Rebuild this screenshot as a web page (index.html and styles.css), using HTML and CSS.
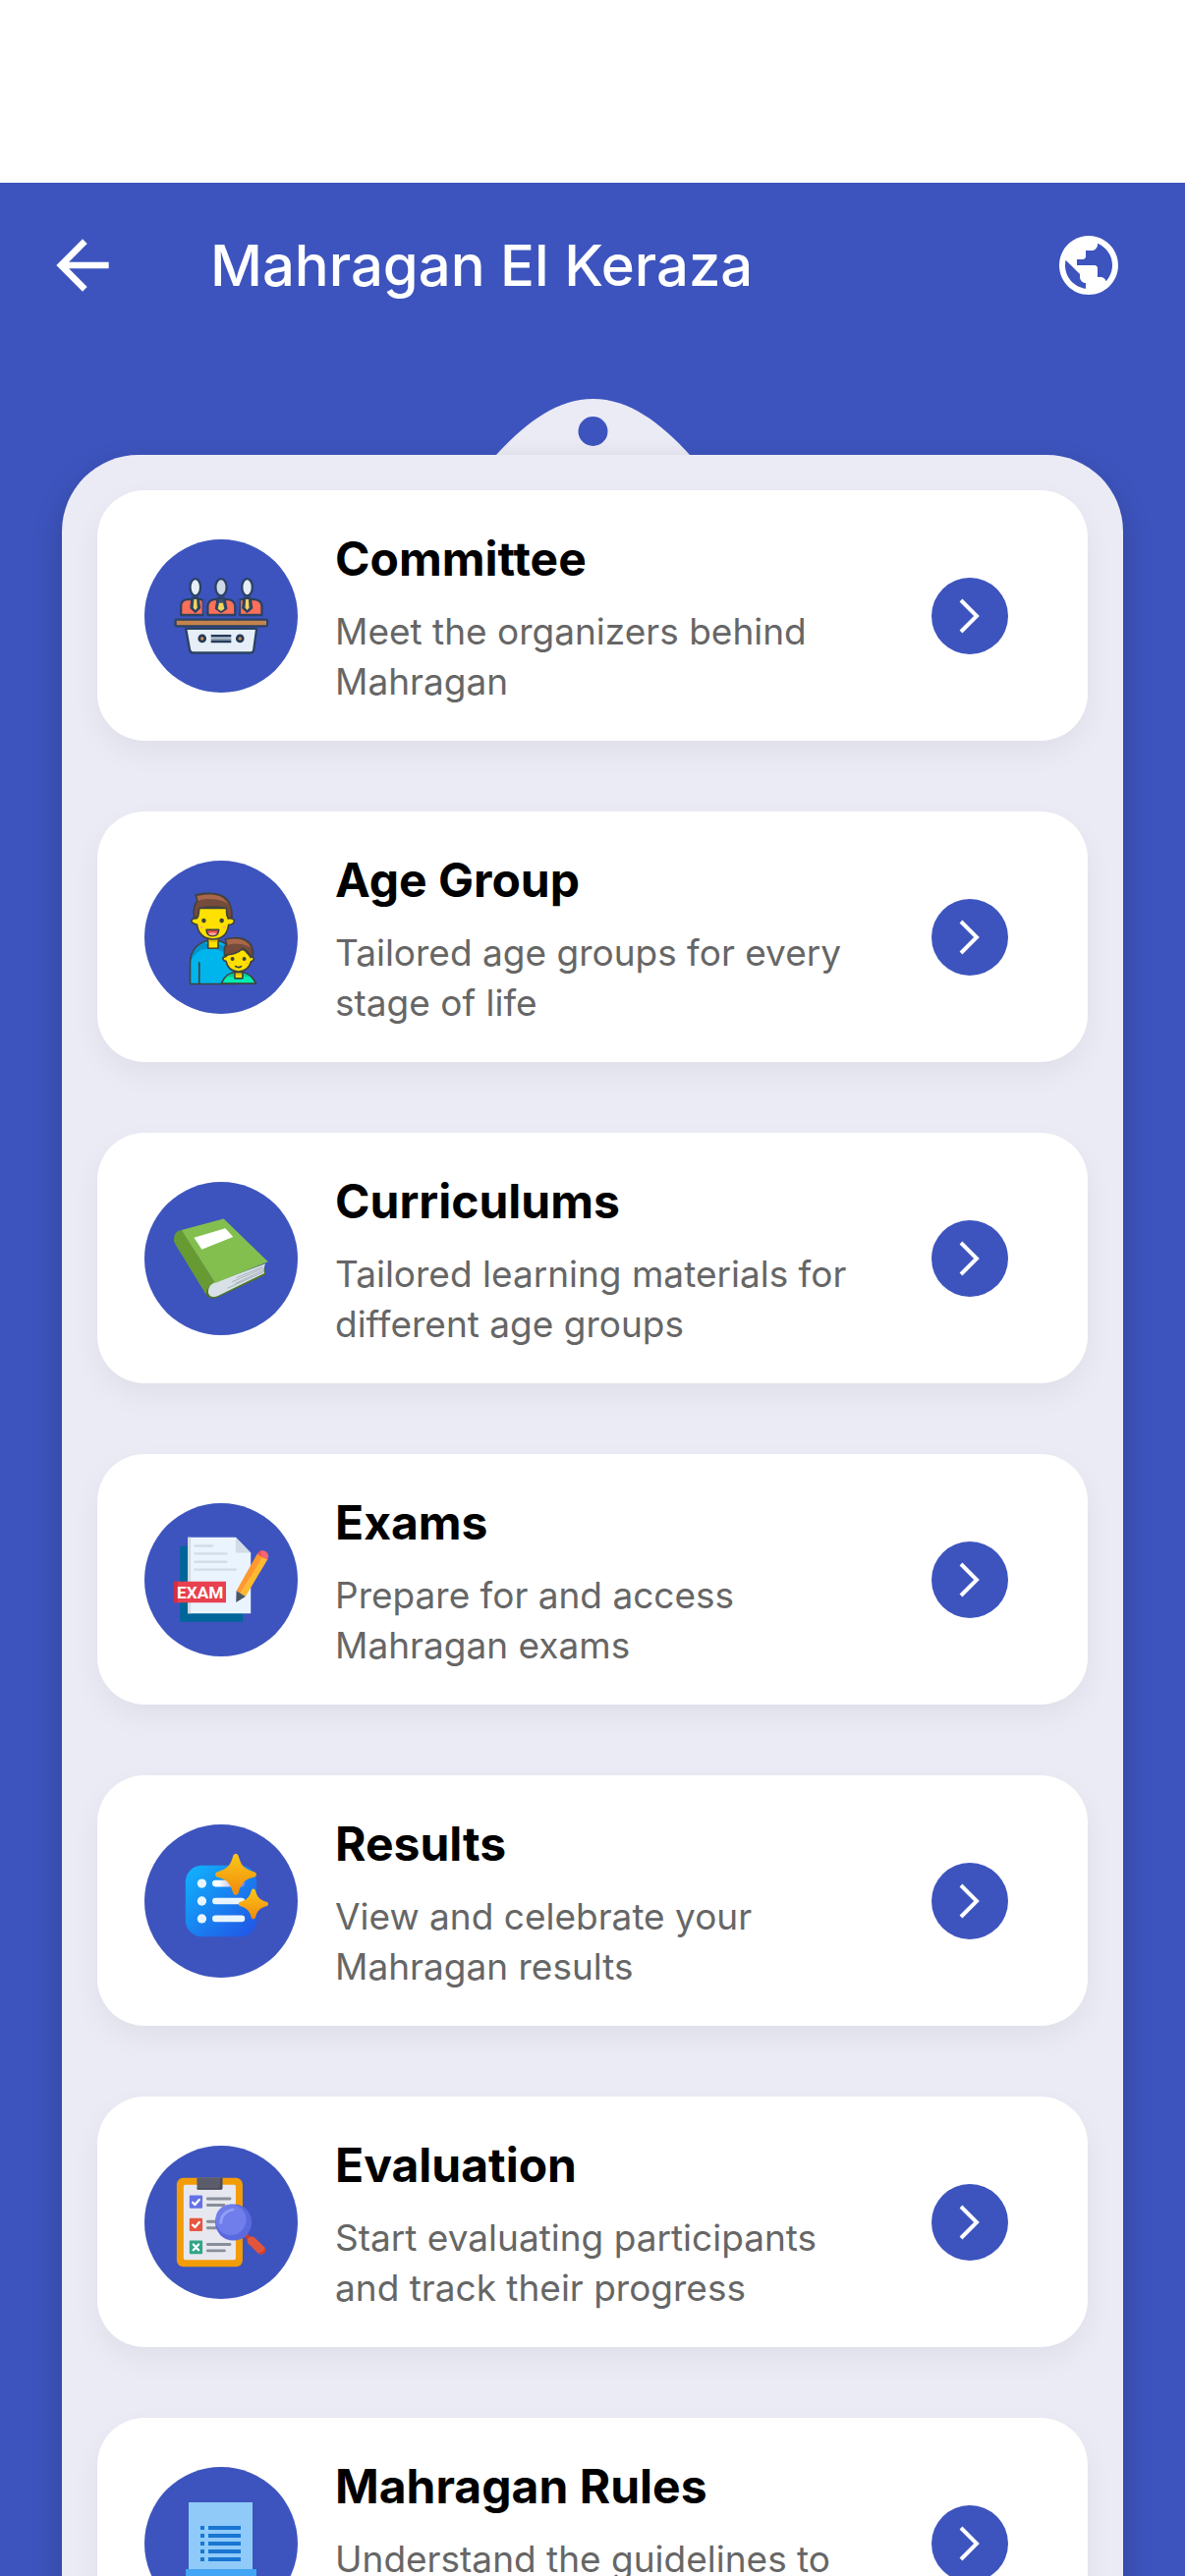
FILE: index.html
```
<!DOCTYPE html>
<html lang="en">

<head>
  <meta charset="UTF-8">
  <meta name="viewport" content="width=device-width, initial-scale=1.0">
  <title>Mahragan El Keraza</title>
  <link rel="stylesheet" href="styles.css">
</head>

<body>
  <div class="screen">
    <header class="app-bar">
      <button class="icon-button back" type="button" aria-label="Back">
        <svg viewBox="0 0 24 24"><path d="M20 11H7.83l5.59-5.59L12 4l-8 8 8 8 1.41-1.41L7.83 13H20v-2z"/></svg>
      </button>
      <h1>Mahragan El Keraza</h1>
      <button class="icon-button language" type="button" aria-label="Language">
        <svg viewBox="0 0 24 24"><path d="M12 2C6.48 2 2 6.48 2 12s4.48 10 10 10 10-4.48 10-10S17.52 2 12 2zm-1 17.93c-3.95-.49-7-3.85-7-7.93 0-.62.08-1.21.21-1.79L9 15v1c0 1.1.9 2 2 2v1.93zm6.9-2.54c-.26-.81-1-1.39-1.9-1.39h-1v-3c0-.55-.45-1-1-1H8v-2h2c.55 0 1-.45 1-1V7h2c1.1 0 2-.9 2-2v-.41c2.93 1.19 5 4.06 5 7.41 0 2.08-.8 3.97-2.1 5.39z"/></svg>
      </button>
    </header>

    <main class="content">
      <!-- clip on top of the board -->
      <svg class="clip" viewBox="0 0 197 57" aria-hidden="true">
        <path fill="#ebebf5" d="M0 57C30 24 62 0 98.500 0S167 24 197 57z"/>
        <circle cx="98.500" cy="33" r="15" fill="#3d54be"/>
      </svg>

      <nav class="board">
        <a class="card" href="#committee">
          <span class="badge">
            <svg viewBox="22 24 470 470" aria-hidden="true">
              <g stroke="#2b4263" stroke-width="7" stroke-linejoin="round">
                <path fill="#ff7058" d="M134 256v-30q2-16 18-18h44q6 2 6 8v40zM216 256v-28q2-18 20-20h42q20 2 22 20v28zM314 256v-48h46q20 2 22 20v28z"/>
                <path fill="#3a5170" d="M168 204h18l5 30-13 12-13-12zM247 204h20l6 32-16 10-15-10zM328 204h18l5 30-14 12-13-12z"/>
                <path fill="#3b4fb0" stroke="none" d="M201 206l9-2v50h-9zM306 204l9 2-3 48h-6z"/>
                <ellipse cx="178" cy="171" rx="16" ry="26" fill="#e6eef7"/>
                <ellipse cx="257" cy="171" rx="17" ry="26" fill="#ccd9e6"/>
                <ellipse cx="337" cy="171" rx="16" ry="26" fill="#e6eef7"/>
              </g>
              <path fill="#f3d55b" d="M174 208h8l2 26-6 7-6-7zM251 219h12l4 18-10 7-10-7zM333 208h8l2 26-6 7-6-7z"/>
              <rect x="117" y="270" width="282" height="20" rx="4" fill="#c4834d" stroke="#2b4263" stroke-width="7"/>
              <path fill="#e6eef7" stroke="#2b4263" stroke-width="7" stroke-linejoin="round" d="M149 298h217l-9 66q-3 8-10 8H171q-8 0-10-8z"/>
              <path stroke="#243b58" stroke-width="8" d="M226 320h62M226 337h62"/>
              <path stroke="#5c7088" stroke-width="3" d="M226 329h62"/>
              <g fill="#d69252" stroke="#243b58" stroke-width="8">
                <circle cx="199" cy="328" r="9"/>
                <circle cx="315" cy="328" r="9"/>
              </g>
            </svg>
          </span>
          <span class="text">
            <span class="title">Committee</span>
            <span class="description">Meet the organizers behind Mahragan</span>
          </span>
          <span class="arrow"><svg viewBox="0 0 78 78"><path d="M30 23l16 16-16 16"/></svg></span>
        </a>

        <a class="card" href="#age-group">
          <span class="badge">
            <svg viewBox="22 21 470 470" aria-hidden="true">
              <g stroke="#3f433f" stroke-width="5" stroke-linejoin="round" stroke-linecap="round">
                <path fill="#00b4ec" d="M162 399v-69q4-43 40-59l15-5h31l14 5q40 18 44 61v67z"/>
                <path fill="#0092cc" stroke="none" d="M165 326q6-40 40-54l11 5v15h32v-15l18 6v10q-5 3-3 8l-20-9H204q-24 6-39 34z"/>
                <path fill="none" d="M190 334v64"/>
                <path fill="#ffe100" d="M217 258h31v32h-31z"/>
                <path fill="#e6bd00" stroke="none" d="M220 261h26v8q-13 5-26 0z"/>
                <path fill="#ffe100" d="M187 167h87l4 31q20-2 19 10-2 9-17 10-5 43-47 44-44-2-50-45-15-3-17-10 1-10 17-9z"/>
                <path fill="#754b3c" d="M174 197q-4-38 10-53l-5-18q75-14 98 17 15 18 13 51l-11 4q-5-8-5-19v-12q-42-8-84 0-2 20-4 26z"/>
                <path fill="#a9674a" stroke="none" d="M183 130q67-15 89 15l7 9q-20-15-53-15-29-2-39 6z"/>
                <path fill="#ffe100" d="M270 316q-8-1-7 6 1 7 9 7 6 31 38 33 32-2 39-32 9-1 8-9-2-7-10-6l-18-20-28-4z"/>
                <path fill="#754b3c" d="M268 312q-4-28 6-34l-4-16q62-15 80 20 7 14 4 31l-6 5q-4-16-25-28-16 18-49 20z"/>
                <path fill="#a9674a" stroke="none" d="M273 264q47-9 67 12l8 12q-18-12-42-12-20-1-27 5z"/>
                <path fill="#00edb3" d="M258 398q11-29 40-35h25q28 6 41 35z"/>
                <path fill="#00c798" stroke="none" d="M272 377q11-9 25-11v11zM323 366q15 3 26 12l-27-3z"/>
                <path fill="#ffe100" d="M299 364h24v18h-24z"/>
                <path fill="#e6bd00" stroke="none" d="M302 366h18v6q-9 3-18 0z"/>
                <path fill="none" d="M301 345q10 6 18 0"/>
                <path fill="#f04f4d" d="M212 233h38q-2 19-19 19t-19-19z"/>
                <path fill="#ffa69d" stroke="none" d="M217 244q14-5 28 0-5 7-14 7t-14-7z"/>
              </g>
              <g fill="#3f433f">
                <circle cx="204" cy="205" r="7"/><circle cx="259" cy="205" r="7"/>
                <circle cx="292" cy="322" r="6"/><circle cx="328" cy="322" r="6"/>
              </g>
              <g fill="#ffb252">
                <ellipse cx="197" cy="225" rx="6" ry="3"/><ellipse cx="267" cy="225" rx="6" ry="3"/>
                <ellipse cx="284" cy="335" rx="5" ry="2"/><ellipse cx="337" cy="335" rx="5" ry="2"/>
              </g>
            </svg>
          </span>
          <span class="text">
            <span class="title">Age Group</span>
            <span class="description">Tailored age groups for every stage of life</span>
          </span>
          <span class="arrow"><svg viewBox="0 0 78 78"><path d="M30 23l16 16-16 16"/></svg></span>
        </a>

        <a class="card" href="#curriculums">
          <span class="badge">
            <svg viewBox="22 24 470 470" aria-hidden="true">
              <path fill="#4e7620" d="M212 350l25-15 152-60 4 34-148 70q-22 6-33-8z"/>
              <path fill="#689a34" d="M138 172q-26 1-26 32l4 10 96 157q-4-25 27-37z"/>
              <path fill="#d9e1e8" d="M393 275q-8 16-3 29l-141 69q-24 10-31-8-4-22 20-33z"/>
              <path fill="none" stroke="#8e99a3" stroke-width="2" d="M386 284l-82 34M386 289l-96 42M387 295l-87 41M388 300l-111 50"/>
              <path fill="#83bf4f" d="M136 172l129-35 136 132-162 65z"/>
              <path fill="#fff" d="M174 195l96-29 24 27-96 38z"/>
            </svg>
          </span>
          <span class="text">
            <span class="title">Curriculums</span>
            <span class="description">Tailored learning materials for different age groups</span>
          </span>
          <span class="arrow"><svg viewBox="0 0 78 78"><path d="M30 23l16 16-16 16"/></svg></span>
        </a>

        <a class="card" href="#exams">
          <span class="badge">
            <svg viewBox="22 21 470 470" aria-hidden="true">
              <path fill="#006699" d="M131 153h193v232H131z"/>
              <path fill="#eaf4ff" d="M155 126h147l46 47v186H155z"/>
              <path fill="#d2dce6" d="M155 126h9v233h-9zM302 126l46 47h-46z"/>
              <path fill="none" stroke="#d2dce6" stroke-width="7" stroke-linecap="round" d="M177 152h53M177 176h96M177 201h96M177 225h125"/>
              <path fill="#e8404f" d="M113 261h159v65H113z"/>
              <path fill="#d62d43" d="M113 261h11v65h-11z"/>
              <text class="exam-label" x="193" y="313" text-anchor="middle">EXAM</text>
              <path fill="#ff9830" d="M304 290l64-114 18 10-70 112z"/>
              <path fill="#ffb930" d="M316 298l68-113 16 8-68 114z"/>
              <path fill="#e95360" d="M368 176q6-10 15-10l11 20-8 2z"/>
              <path fill="#f66570" d="M378 167q17-3 23 11 3 8-2 16l-18-10z"/>
              <path fill="#4a5664" d="M304 290l28 17-29 18z"/>
            </svg>
          </span>
          <span class="text">
            <span class="title">Exams</span>
            <span class="description">Prepare for and access Mahragan exams</span>
          </span>
          <span class="arrow"><svg viewBox="0 0 78 78"><path d="M30 23l16 16-16 16"/></svg></span>
        </a>

        <a class="card" href="#results">
          <span class="badge">
            <svg viewBox="22 24 470 470" aria-hidden="true">
              <defs>
                <linearGradient id="list-fill" x1="0" y1="0" x2="1" y2="1">
                  <stop offset="0" stop-color="#10b5fd"/>
                  <stop offset="1" stop-color="#2251e5"/>
                </linearGradient>
                <linearGradient id="star-fill" x1="0" y1="0" x2="0" y2="1">
                  <stop offset="0" stop-color="#fbc718"/>
                  <stop offset="1" stop-color="#f18a0b"/>
                </linearGradient>
                <linearGradient id="row-fill" x1="0" y1="0" x2="1" y2="0">
                  <stop offset="0.200" stop-color="#fff"/>
                  <stop offset="1" stop-color="#7f80df"/>
                </linearGradient>
              </defs>
              <rect x="148" y="150" width="218" height="218" rx="50" fill="url(#list-fill)"/>
              <g fill="#eaf6ff">
                <circle cx="198" cy="205" r="14"/><circle cx="198" cy="259" r="14"/><circle cx="198" cy="313" r="14"/>
                <rect x="230" y="249" width="100" height="20" rx="10"/>
                <rect x="230" y="303" width="100" height="20" rx="10"/>
              </g>
              <rect x="230" y="195" width="100" height="20" rx="10" fill="url(#row-fill)"/>
              <path fill="url(#star-fill)" d="M294 120q8-12 16 0c8 30 18 42 50 50q12 8 0 15c-32 8-42 20-50 50q-8 12-16 0c-8-30-18-42-50-50q-10-7 0-15c32-8 42-20 50-50z"/>
              <path fill="url(#star-fill)" d="M350 226q6-9 12 0c6 22 14 30 36 36q8 6 0 12c-22 6-30 14-36 36q-6 9-12 0c-6-22-14-30-36-36q-7-6 0-12c22-6 30-14 36-36z"/>
            </svg>
          </span>
          <span class="text">
            <span class="title">Results</span>
            <span class="description">View and celebrate your Mahragan results</span>
          </span>
          <span class="arrow"><svg viewBox="0 0 78 78"><path d="M30 23l16 16-16 16"/></svg></span>
        </a>

        <a class="card" href="#evaluation">
          <span class="badge">
            <svg viewBox="22 21 470 470" aria-hidden="true">
              <rect x="121" y="120" width="202" height="272" rx="20" fill="#f29c07"/>
              <rect x="142" y="141" width="160" height="230" rx="5" fill="#e7e8ef"/>
              <path fill="#5b5d6b" d="M183 120h78v31q0 5-5 5h-68q-5 0-5-5z"/>
              <path fill="#4c4b5a" d="M254 120h7v31q0 5-5 5h-68q-5 0-5-5h60q10 0 11-12z"/>
              <rect x="160" y="173" width="40" height="40" rx="3" fill="#6471e5"/>
              <rect x="160" y="243" width="40" height="40" rx="3" fill="#e5553f"/>
              <rect x="160" y="312" width="40" height="41" rx="3" fill="#30a588"/>
              <g fill="none" stroke="#fff" stroke-width="7" stroke-linecap="round" stroke-linejoin="round">
                <path d="M170 195l7 7 13-15M170 264l7 7 13-15M172 324l16 17M188 324l-16 17"/>
              </g>
              <path stroke="#888e99" stroke-width="9" stroke-linecap="round" d="M216 184h68M216 203h50M216 254h34M216 273h38M216 324h68M216 343h51"/>
              <path stroke="#ca3e30" stroke-width="13" d="M330 292l14 15"/>
              <path stroke="#e1553d" stroke-width="27" stroke-linecap="round" d="M351 313l29 28"/>
              <path fill="none" stroke="#cc3d30" stroke-width="6" stroke-linecap="round" d="M392 340q-3 11-16 11"/>
              <circle cx="295" cy="256" r="56" fill="#5b69df"/>
              <circle cx="287" cy="248" r="47" fill="#707eeb"/>
              <path fill="none" stroke="#929ff7" stroke-width="8" stroke-linecap="round" d="M256 258q2-34 38-41"/>
            </svg>
          </span>
          <span class="text">
            <span class="title">Evaluation</span>
            <span class="description">Start evaluating participants and track their progress</span>
          </span>
          <span class="arrow"><svg viewBox="0 0 78 78"><path d="M30 23l16 16-16 16"/></svg></span>
        </a>

        <a class="card" href="#rules">
          <span class="badge">
            <svg viewBox="0 0 156 156" aria-hidden="true">
              <path fill="#90caf9" d="M45 36h65v74H45z"/>
              <path fill="#42a5f5" d="M42 104h72v16H42z"/>
              <path stroke="#1976d2" stroke-width="4" d="M57 62h4m4 0h33M57 70h4m4 0h33M57 78h4m4 0h33M57 86h4m4 0h33M57 94h4m4 0h33"/>
            </svg>
          </span>
          <span class="text">
            <span class="title">Mahragan Rules</span>
            <span class="description">Understand the guidelines to</span>
          </span>
          <span class="arrow"><svg viewBox="0 0 78 78"><path d="M30 23l16 16-16 16"/></svg></span>
        </a>
      </nav>
    </main>
  </div>
</body>

</html>
```

FILE: styles.css
```
* {
  box-sizing: border-box;
}

body {
  margin: 0;
  background-color: white;
  font-family: Inter, "Liberation Sans", sans-serif;
  font-optical-sizing: none;
}

/* white strip on top is the system status bar */
.screen {
  display: flex;
  flex-direction: column;
  height: 100vh;
  padding-top: 186px;
}

.app-bar {
  display: flex;
  align-items: center;
  flex: none;
  height: 168px;
  padding: 0 62px 0 44px;
  background-color: #3d54be;
  color: white;
}

.app-bar h1 {
  flex: 1;
  margin: 0 0 0 90px;
  font-size: 58px;
  font-weight: 500;
  line-height: 72px;
}

.icon-button {
  display: flex;
  padding: 0;
  border: none;
  background: none;
  color: white;
  cursor: pointer;
}

.icon-button svg {
  fill: currentColor;
}

.back svg {
  width: 80px;
  height: 80px;
}

.language svg {
  width: 72px;
  height: 72px;
}

.content {
  display: flex;
  flex-direction: column;
  flex: 1;
  min-height: 0;
  padding: 52px 63px 0;
  background-color: #3d54be;
  overflow: hidden;
}

.clip {
  flex: none;
  align-self: center;
  width: 197px;
  height: 57px;
}

.board {
  display: flex;
  flex-direction: column;
  flex: none;
  gap: 72px;
  padding: 36px;
  border-radius: 78px;
  background-color: #ebebf5;
  box-shadow: 0 12px 30px rgba(0, 0, 0, 0.2);
}

.card {
  display: flex;
  align-items: center;
  height: 255px;
  padding: 0 81px 0 48px;
  border-radius: 48px;
  background-color: white;
  box-shadow: 0 12px 30px rgba(0, 0, 0, 0.05);
  text-decoration: none;
}

.badge {
  flex: none;
  width: 156px;
  height: 156px;
  border-radius: 50%;
  background-color: #3d54be;
  overflow: hidden;
}

.badge svg {
  display: block;
  width: 100%;
  height: 100%;
}

.exam-label {
  fill: white;
  font-family: Roboto, sans-serif;
  font-size: 52px;
  font-weight: 700;
}

.text {
  display: flex;
  flex-direction: column;
  flex: 1;
  gap: 18px;
  padding-top: 4px;
  margin: 0 60px 0 38px;
}

.title {
  color: black;
  font-size: 48px;
  font-weight: 700;
  line-height: 60px;
}

.description {
  min-height: 102px;
  color: #666;
  font-size: 37px;
  line-height: 51px;
}

.arrow {
  flex: none;
  width: 78px;
  height: 78px;
  border-radius: 50%;
  background-color: #3d54be;
}

.arrow svg {
  fill: none;
  stroke: white;
  stroke-width: 4;
}
```
